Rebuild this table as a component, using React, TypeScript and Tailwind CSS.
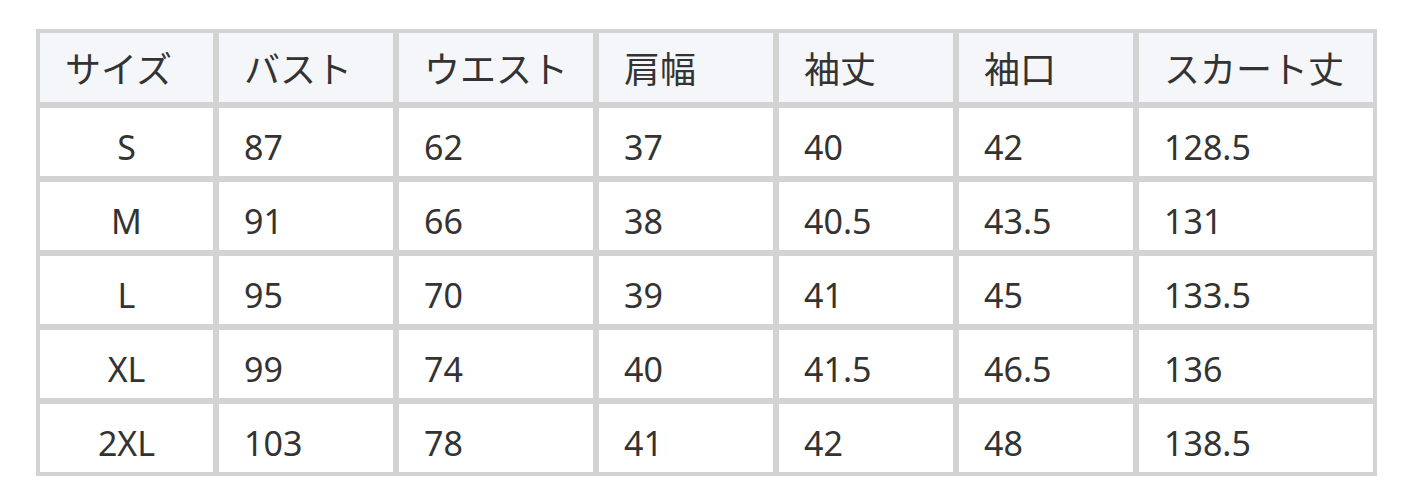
import React from 'react';

const SizeChart = () => {
  const headers = ['サイズ', 'バスト', 'ウエスト', '肩幅', '袖丈', '袖口', 'スカート丈'];
  const rows = [
    ['S', '87', '62', '37', '40', '42', '128.5'],
    ['M', '91', '66', '38', '40.5', '43.5', '131'],
    ['L', '95', '70', '39', '41', '45', '133.5'],
    ['XL', '99', '74', '40', '41.5', '46.5', '136'],
    ['2XL', '103', '78', '41', '42', '48', '138.5'],
  ];

  return (
    <div className="bg-white w-[1408px] h-[503px] pl-[36px] pt-[29px]">
      <div
        className="inline-grid grid-cols-[173px_174px_194px_174px_174px_174px_234px] grid-rows-[69px_68px_68px_68px_68px_68px] gap-[6px] p-[4px] bg-[#d3d3d3] text-[#333333]"
        style={{ fontFamily: '"Noto Sans", "Noto Sans CJK JP", sans-serif' }}
      >
        {headers.map((h) => (
          <div key={h} className="bg-[#f5f6fa] flex items-center pl-[25px] pt-[4px] text-[36px] leading-none">
            {h}
          </div>
        ))}
        {rows.map((row, i) =>
          row.map((cell, j) => (
            <div
              key={i + '-' + j}
              className={
                j === 0
                  ? 'bg-white flex items-center justify-center pt-[10px] text-[34px] leading-none'
                  : 'bg-white flex items-center pl-[25px] pt-[10px] text-[34px] leading-none'
              }
            >
              {cell}
            </div>
          ))
        )}
      </div>
    </div>
  );
};

export default SizeChart;
